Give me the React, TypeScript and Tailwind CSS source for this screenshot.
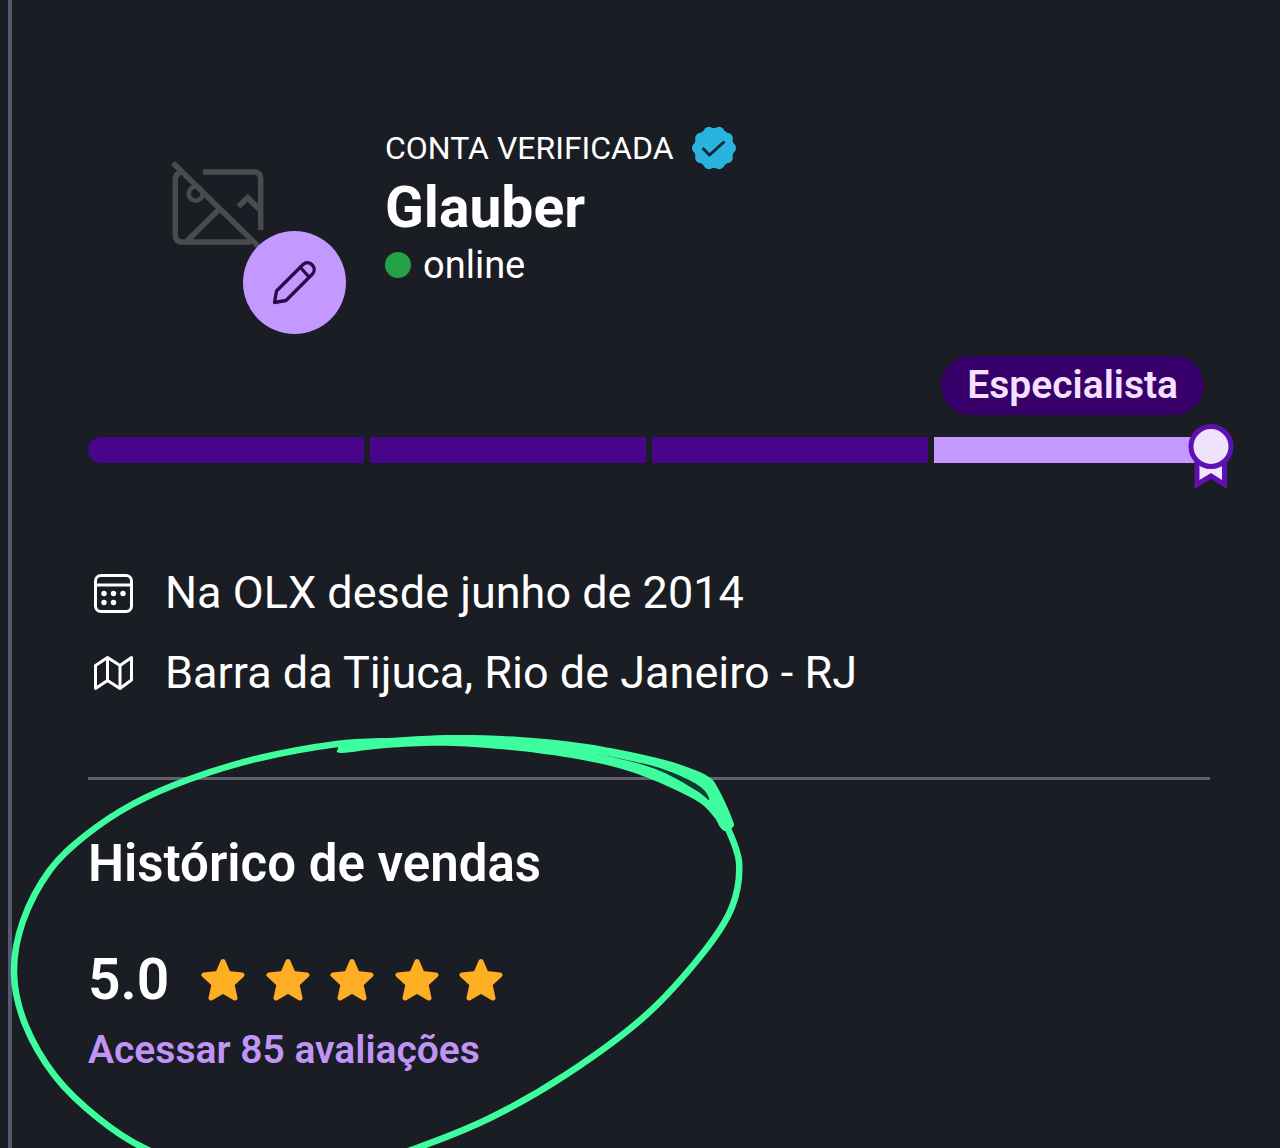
const STEPS = ['Iniciante', 'Intermediário', 'Avançado', 'Especialista']
const RATING = 5

type Point = [number, number]

// hand-drawn marker: thin loop around the sales history
const LOOP: Point[] = [
  [726, 824], [739, 862], [732, 907], [703, 953], [645, 1016], [567, 1074], [490, 1118], [414, 1149],
  [350, 1168], [280, 1178], [210, 1170], [146, 1149], [98, 1118], [55, 1076], [25, 1024], [14, 973],
  [23, 921], [50, 870], [86, 835], [133, 804], [190, 779], [260, 758], [337, 744], [390, 741],
]

// thick overlapping part of the marker
const SWIPE: Point[] = [
  [345, 744], [390, 738], [453, 735], [520, 737], [587, 744], [653, 757], [687, 767], [709, 777],
  [719, 790], [733, 821], [732, 828], [725, 831], [720, 827], [714, 817], [697, 801], [653, 780],
  [607, 765], [537, 753], [453, 746], [387, 748], [342, 753], [338, 749],
]

const GAP: Point[] = [
  [597, 754], [653, 766], [687, 779], [704, 790], [709, 800], [697, 791], [667, 774], [637, 763],
]

function smooth(points: Point[], closed = false) {
  const n = points.length
  const at = (i: number) => (closed ? points[(i + n) % n] : points[Math.max(0, Math.min(n - 1, i))])
  let d = `M${at(0).join(' ')}`
  for (let i = 0; i < (closed ? n : n - 1); i++) {
    const [p0, p1, p2, p3] = [at(i - 1), at(i), at(i + 1), at(i + 2)]
    d += `C${p1[0] + (p2[0] - p0[0]) / 6} ${p1[1] + (p2[1] - p0[1]) / 6} ${p2[0] - (p3[0] - p1[0]) / 6} ${p2[1] - (p3[1] - p1[1]) / 6} ${p2[0]} ${p2[1]}`
  }
  return closed ? d + 'Z' : d
}

function NoImageIcon() {
  return (
    <svg viewBox="165 156 104 96" className="h-24 w-[104px]" fill="none" stroke="#4a4b4e" strokeWidth="5.5" aria-hidden="true">
      <path d="M203 171H254Q260.700 171 260.700 178V229" />
      <path d="M182 171Q175.300 172 175.300 179V234Q175.300 241 182 241H251" />
      <path d="M173 162L259 246" />
      <circle cx="195.700" cy="192.700" r="7" strokeWidth="4.500" />
      <path d="M187 240L218.300 209" />
      <path d="M238.500 205.500L247.700 196.700L259 208" />
    </svg>
  )
}

function PencilIcon() {
  return (
    <svg viewBox="269 257 52 52" className="h-[52px] w-[52px]" fill="none" stroke="#2a0a4a" strokeWidth="3.3" strokeLinejoin="round" aria-hidden="true">
      <path d="M274.500 302.500L276.500 291L303 264.500C309 259 318 267.500 312.500 274L286 300.500Z" />
      <path d="M300.500 267.500L309 277" />
    </svg>
  )
}

function VerifiedIcon() {
  return (
    <svg viewBox="0 0 48 48" className="h-12 w-12" role="img" aria-label="Verificada">
      <g fill="#28b4dc">
        <circle cx="24" cy="24" r="20" />
        {Array.from({ length: 10 }, (_, i) => {
          const a = (i * Math.PI) / 5
          return <circle key={i} cx={24 + 16.5 * Math.cos(a)} cy={24 + 16.5 * Math.sin(a)} r="5.500" />
        })}
      </g>
      <path d="M12.500 24L19.500 31L34.500 17.500" fill="none" stroke="#13283a" strokeWidth="3" />
    </svg>
  )
}

function MedalIcon() {
  return (
    <svg viewBox="0 0 46 66" className="absolute -right-6 -top-[13px] h-[66px] w-[46px]" stroke="#5e11b0" aria-hidden="true">
      <path d="M9 38V60.500L23 52L36.500 60.500V38Z" fill="#f3e6ff" strokeWidth="5" />
      <circle cx="23" cy="22.500" r="20" fill="#efe3fb" strokeWidth="5" />
    </svg>
  )
}

function CalendarIcon() {
  return (
    <svg viewBox="0 0 48 48" className="h-12 w-12 shrink-0" fill="none" stroke="#fff" strokeWidth="3" aria-hidden="true">
      <rect x="7.500" y="6.500" width="36" height="36" rx="5.500" />
      <path d="M7.500 16H43.500" />
      <g fill="#fff" stroke="none">
        <circle cx="16" cy="24.500" r="2.700" />
        <circle cx="25.500" cy="24.500" r="2.700" />
        <circle cx="35" cy="24.500" r="2.700" />
        <circle cx="16" cy="33.500" r="2.700" />
        <circle cx="25.500" cy="33.500" r="2.700" />
      </g>
    </svg>
  )
}

function MapIcon() {
  return (
    <svg viewBox="0 0 48 48" className="h-12 w-12 shrink-0" fill="none" stroke="#fff" strokeWidth="3" strokeLinejoin="round" aria-hidden="true">
      <path d="M7.500 16.500L19.500 8.500L32 16.500L43.500 8.500V31L32 39.500L19.500 31.500L7.500 39.500Z" />
      <path d="M19.500 8.500V31.500M32 16.500V39.500" />
    </svg>
  )
}

function StarIcon() {
  return (
    <svg viewBox="0 0 44 44" className="h-11 w-11" fill="#fdae22" stroke="#fdae22" strokeWidth="5" strokeLinejoin="round" aria-hidden="true">
      <path d="M22 3.500L27.200 15.600L41 17L31 26.200L34 40L22 33L10 40L13 26.200L3 17L16.800 15.600Z" />
    </svg>
  )
}

export default function App() {
  return (
    <div className="min-h-screen overflow-hidden bg-[#1a1d23] pl-2 font-['Roboto',sans-serif] text-white">
      <main className="min-h-screen border-l-4 border-[#555a74] pl-[76px] pr-[70px] pt-[76px]">
        {/* Profile */}
        <header className="flex items-center gap-[39px]">
          <div className="relative flex h-[258px] w-[258px] shrink-0 items-center justify-center">
            <NoImageIcon />
            <button
              aria-label="Editar foto"
              className="absolute bottom-0 right-0 flex h-[103px] w-[103px] items-center justify-center rounded-full bg-[#c499ff]"
            >
              <PencilIcon />
            </button>
          </div>
          <div>
            <div className="flex items-center gap-4">
              <p className="text-[32px] leading-[48px]">CONTA VERIFICADA</p>
              <VerifiedIcon />
            </div>
            <h1 className="text-[57px] font-bold leading-[72px]">Glauber</h1>
            <p className="flex items-center gap-3 text-[38px] leading-[42px]">
              <span className="h-[26px] w-[26px] rounded-full bg-[#24a148]" />
              online
            </p>
          </div>
        </header>

        {/* Seller level */}
        <section className="mt-[22px]">
          <div className="flex justify-end pr-1.5">
            <span className="rounded-full bg-[#37006b] px-[26px] text-[39px] font-semibold leading-[59px] text-[#f6e0ff]">
              Especialista
            </span>
          </div>
          <div className="relative mt-[22px]">
            <div className="flex gap-1.5">
              {STEPS.map((step, i) => (
                <div
                  key={step}
                  className={`h-[26px] flex-1 first:rounded-l-full ${i === STEPS.length - 1 ? 'bg-[#c499ff]' : 'bg-[#48058c]'}`}
                />
              ))}
            </div>
            <MedalIcon />
          </div>
        </section>

        {/* Info */}
        <ul className="mt-[100px] flex flex-col gap-5 text-[45px] leading-[60px]">
          <li className="flex items-center gap-[29px]">
            <CalendarIcon />
            Na OLX desde junho de 2014
          </li>
          <li className="flex items-center gap-[29px]">
            <MapIcon />
            Barra da Tijuca, Rio de Janeiro - RJ
          </li>
        </ul>

        {/* Sales history */}
        <section className="relative mt-[74px] border-t-3 border-[#5f6270] pt-[52px]">
          <h2 className="text-[51px] font-semibold leading-[64px]">Histórico de vendas</h2>
          <div className="mt-[50px] flex items-center gap-8">
            <span className="text-[57px] font-semibold leading-[68px]">5.0</span>
            <div className="flex w-[302px] justify-between" role="img" aria-label="5 de 5 estrelas">
              {Array.from({ length: RATING }, (_, i) => (
                <StarIcon key={i} />
              ))}
            </div>
          </div>
          <a href="#avaliacoes" className="mt-3 inline-block text-[39px] font-semibold leading-[48px] text-[#c095f7]">
            Acessar 85 avaliações
          </a>

          <svg
            viewBox="0 720 760 428"
            className="pointer-events-none absolute -left-[88px] -top-[60px] h-[428px] w-[760px]"
            aria-hidden="true"
          >
            <path d={smooth(LOOP)} fill="none" stroke="#3dfd9e" strokeWidth="6.500" />
            <path d={smooth(SWIPE, true)} fill="#3dfd9e" />
            <path d={smooth(GAP, true)} fill="#0d3b2c" />
          </svg>
        </section>
      </main>
    </div>
  )
}
